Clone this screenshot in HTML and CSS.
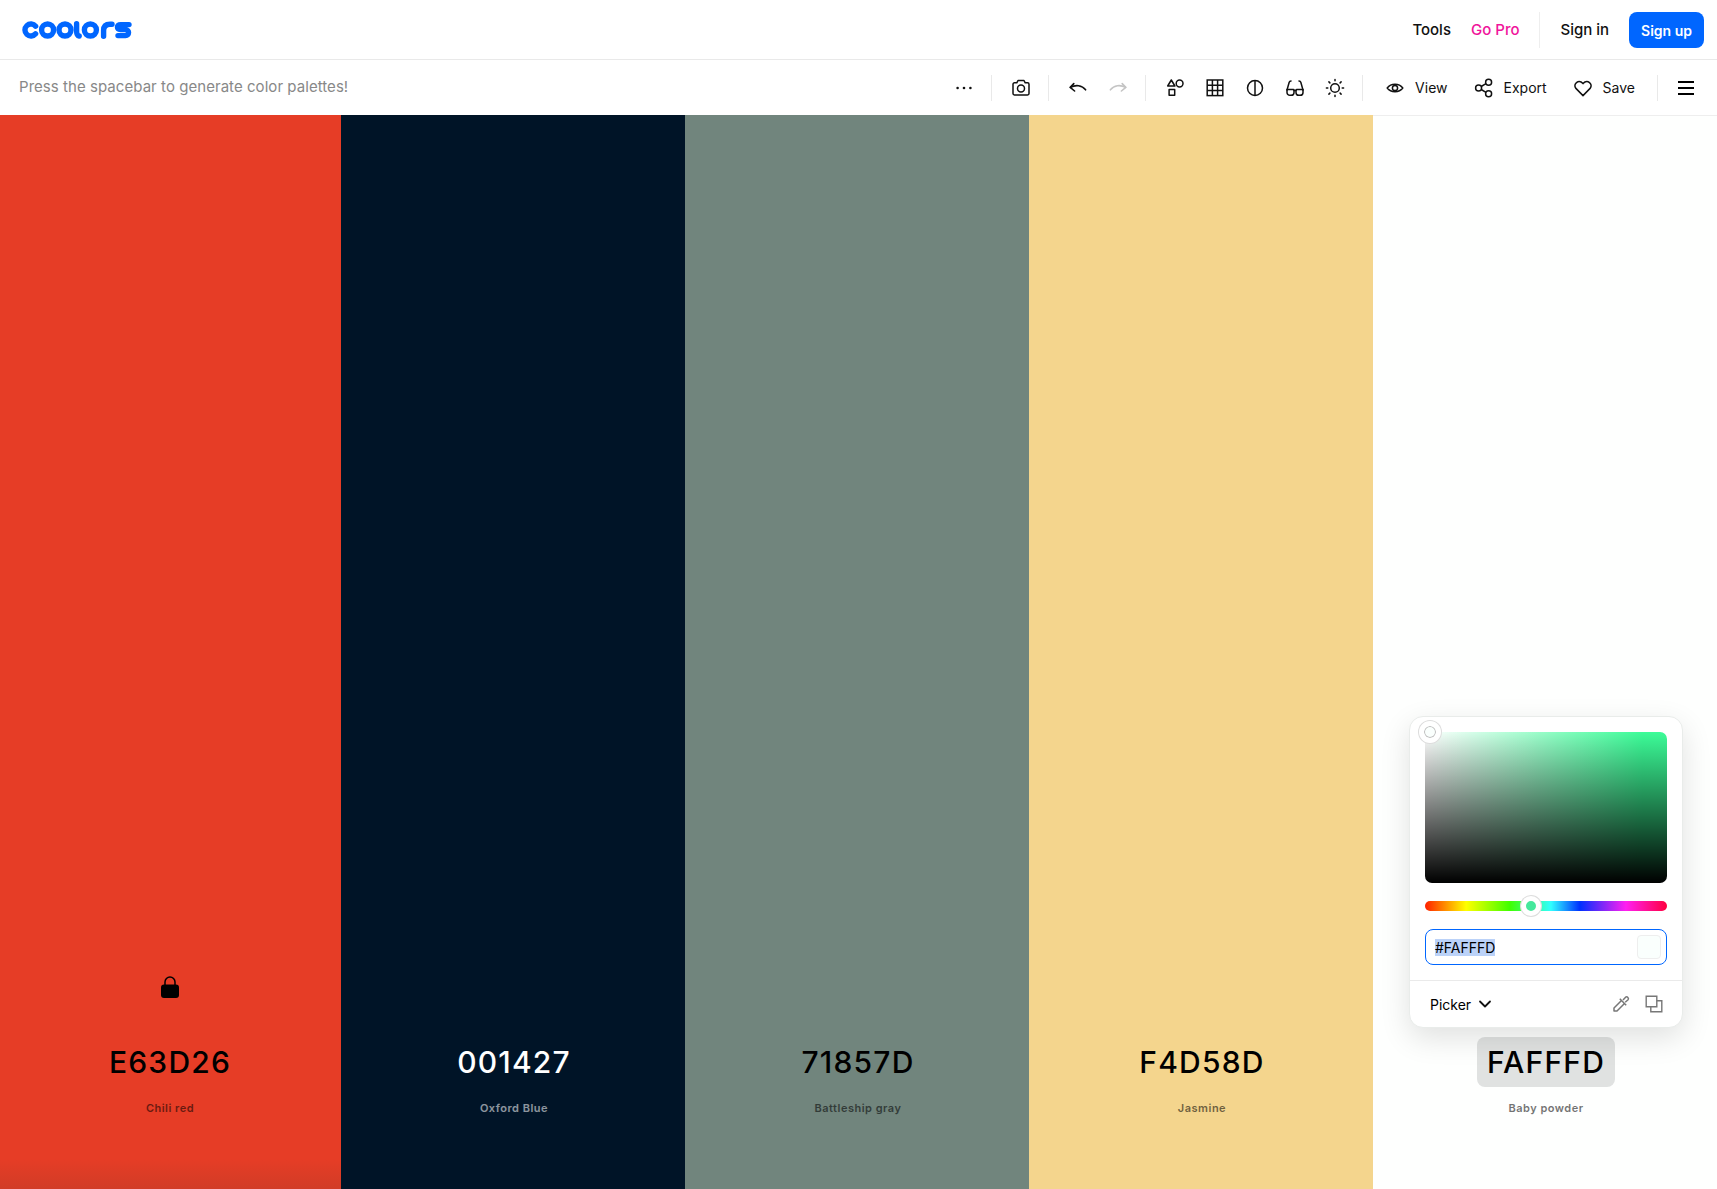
FILE: index.html
```html
<!DOCTYPE html>
<html lang="en">
<head>
    <meta charset="UTF-8">
    <meta name="viewport" content="width=device-width, initial-scale=1.0">
    <title>Coolors palette generator</title>
    <link rel="stylesheet" href="styles.css">
</head>
<body>
    <div class="page">
        <header class="navbar">
            <a class="logo" href="#" aria-label="coolors">
                <svg width="110" height="18" viewBox="0 0 110 18" fill="none" stroke="#0066ff" stroke-width="5.4" stroke-linecap="round">
                    <path d="M13.6 5.2A6 6 0 1 0 13.6 12.8"/>
                    <circle cx="25.6" cy="9" r="6"/>
                    <circle cx="43" cy="9" r="6"/>
                    <path d="M54.6 2.7V10Q54.6 14.6 57.2 15"/>
                    <circle cx="68.4" cy="9" r="6"/>
                    <path d="M81.6 15.2V9.5Q81.6 3.2 88 3.2H90"/>
                    <path d="M107 3.6H98.6C94.4 3.6 94.4 8.4 98.6 8.6H103.4C107.6 8.8 107.6 14.4 103.4 14.6H96"/>
                </svg>
            </a>
            <nav class="nav-links">
                <a href="#">Tools</a>
                <a href="#" class="gopro">Go Pro</a>
                <span class="nav-sep"></span>
                <a href="#">Sign in</a>
                <a href="#" class="signup">Sign up</a>
            </nav>
        </header>

        <div class="toolbar">
            <p class="hint">Press the spacebar to generate color palettes!</p>
            <div class="tools">
                <button class="icon-btn" aria-label="More">
                    <svg width="20" height="20" viewBox="0 0 20 20" fill="#111"><circle cx="3.6" cy="10" r="1.3"/><circle cx="10" cy="10" r="1.3"/><circle cx="16.4" cy="10" r="1.3"/></svg>
                </button>
                <span class="sep"></span>
                <button class="icon-btn" aria-label="Quick view">
                    <svg width="20" height="20" viewBox="0 0 20 20" fill="none" stroke="#111" stroke-width="1.5" stroke-linejoin="round"><path d="M2 6.2a1.4 1.4 0 0 1 1.4-1.4h2.4L7 2.5h6l1.2 2.3h2.4A1.4 1.4 0 0 1 18 6.2v9.4a1.4 1.4 0 0 1-1.4 1.4H3.4A1.4 1.4 0 0 1 2 15.6z"/><circle cx="10" cy="10.6" r="3.5"/></svg>
                </button>
                <span class="sep"></span>
                <button class="icon-btn" aria-label="Undo">
                    <svg width="20" height="20" viewBox="0 0 20 20" fill="none" stroke="#111" stroke-width="1.6" stroke-linecap="round" stroke-linejoin="round"><path d="M5.8 5.6 2.2 9.4l4.4 3.6"/><path d="M2.4 9.4C7.5 6.6 14 7 17.6 11.8"/></svg>
                </button>
                <button class="icon-btn" aria-label="Redo">
                    <svg width="20" height="20" viewBox="0 0 20 20" fill="none" stroke="#c4c4c4" stroke-width="1.6" stroke-linecap="round" stroke-linejoin="round"><path d="M14.2 5.6l3.6 3.8-4.4 3.6"/><path d="M17.6 9.4C12.5 6.6 6 7 2.4 11.8"/></svg>
                </button>
                <span class="sep"></span>
                <button class="icon-btn" aria-label="Shapes">
                    <svg width="20" height="20" viewBox="0 0 20 20" fill="none" stroke="#111" stroke-width="1.5" stroke-linejoin="round"><path d="M6.3 2 9.9 8H2.7z"/><circle cx="14.6" cy="5.5" r="3.4"/><rect x="4.1" y="11.6" width="5.6" height="5.6"/></svg>
                </button>
                <button class="icon-btn" aria-label="Grid">
                    <svg width="20" height="20" viewBox="0 0 20 20" fill="none" stroke="#111" stroke-width="1.5"><rect x="2.2" y="2" width="15.6" height="15.6"/><path d="M7.4 2v15.6M12.6 2v15.6M2.2 7.2h15.6M2.2 12.4h15.6"/></svg>
                </button>
                <button class="icon-btn" aria-label="Contrast">
                    <svg width="20" height="20" viewBox="0 0 20 20" fill="none" stroke="#111" stroke-width="1.5"><circle cx="10" cy="10" r="7.5"/><path d="M10 2.5v15"/></svg>
                </button>
                <button class="icon-btn" aria-label="Color blindness">
                    <svg width="20" height="20" viewBox="0 0 20 20" fill="none" stroke="#111" stroke-width="1.5" stroke-linecap="round" stroke-linejoin="round"><path d="M2 12 4.2 4.2Q4.6 3 6 3"/><path d="M18 12 15.8 4.2Q15.4 3 14 3"/><path d="M2 11.6h6.4a.6.6 0 0 1 .6.6v2.2a2.9 2.9 0 0 1-2.9 2.9H4.9A2.9 2.9 0 0 1 2 14.4z"/><path d="M18 11.6h-6.4a.6.6 0 0 0-.6.6v2.2a2.9 2.9 0 0 0 2.9 2.9h1.2a2.9 2.9 0 0 0 2.9-2.9z"/><path d="M9 12.6h2"/></svg>
                </button>
                <button class="icon-btn" aria-label="Brightness">
                    <svg width="20" height="20" viewBox="0 0 20 20" fill="none" stroke="#111" stroke-width="1.5" stroke-linecap="round"><circle cx="10" cy="10" r="4.3"/><path d="M10 1.4v1.4M10 17.2v1.4M1.4 10h1.4M17.2 10h1.4M3.9 3.9l1 1M15.1 15.1l1 1M3.9 16.1l1-1M15.1 4.9l1-1"/></svg>
                </button>
                <span class="sep"></span>
                <div class="actions">
                    <button class="action-btn">
                        <svg width="20" height="20" viewBox="0 0 20 20" fill="none" stroke="#111" stroke-width="1.5" stroke-linejoin="round"><path d="M2.2 10C6 5 14 5 17.8 10 14 15 6 15 2.2 10z"/><circle cx="10" cy="10" r="2.6"/></svg>
                        View
                    </button>
                    <button class="action-btn">
                        <svg width="20" height="20" viewBox="0 0 20 20" fill="none" stroke="#111" stroke-width="1.5"><circle cx="4.6" cy="10" r="3"/><circle cx="14.6" cy="4.2" r="3"/><circle cx="14.6" cy="15.8" r="3"/><path d="M7.2 8.5l4.8-2.8M7.2 11.5l4.8 2.8"/></svg>
                        Export
                    </button>
                    <button class="action-btn">
                        <svg width="20" height="20" viewBox="0 0 20 20" fill="none" stroke="#111" stroke-width="1.5" stroke-linejoin="round"><path d="M10 17.6 2.9 10.4C-.6 6.2 5.6 .6 10 5.6 14.4 .6 20.6 6.2 17.1 10.4z"/></svg>
                        Save
                    </button>
                </div>
                <span class="sep"></span>
                <button class="icon-btn menu-btn" aria-label="Menu">
                    <svg width="20" height="20" viewBox="0 0 20 20" fill="none" stroke="#000" stroke-width="1.8"><path d="M2 4h16M2 10h16M2 16h16"/></svg>
                </button>
            </div>
        </div>

        <main class="palette">
            <section class="swatch chili">
                <svg class="lock" width="20" height="22" viewBox="0 0 20 22" fill="#000"><path d="M5 9V6a5 5 0 0 1 10 0v3" fill="none" stroke="#000" stroke-width="1.5"/><rect x="1" y="8.5" width="18" height="13.5" rx="3"/></svg>
                <div class="hex">E63D26</div>
                <div class="name">Chili red</div>
            </section>
            <section class="swatch oxford">
                <div class="hex">001427</div>
                <div class="name">Oxford Blue</div>
            </section>
            <section class="swatch battleship">
                <div class="hex">71857D</div>
                <div class="name">Battleship gray</div>
            </section>
            <section class="swatch jasmine">
                <div class="hex">F4D58D</div>
                <div class="name">Jasmine</div>
            </section>
            <section class="swatch baby">
                <div class="hex active">FAFFFD</div>
                <div class="name">Baby powder</div>

                <div class="picker">
                    <div class="picker-body">
                        <div class="sat-box">
                            <span class="sat-thumb"></span>
                        </div>
                        <div class="hue-bar">
                            <span class="hue-thumb"></span>
                        </div>
                        <div class="hex-input">
                            <span class="selected">#FAFFFD</span>
                            <span class="chip"></span>
                        </div>
                    </div>
                    <div class="picker-foot">
                        <span class="mode">
                            Picker
                            <svg width="14" height="14" viewBox="0 0 14 14" fill="none" stroke="#111" stroke-width="1.8" stroke-linecap="round" stroke-linejoin="round"><path d="M2 4.5l5 5 5-5"/></svg>
                        </span>
                        <span class="foot-icons">
                            <svg width="18" height="18" viewBox="0 0 18 18" fill="none" stroke="#777" stroke-width="1.5" stroke-linejoin="round"><path d="M9.5 5.5 2 13v3h3l7.5-7.5"/><path d="M7.8 3.8l6.4 6.4M11 5l2.6-2.8a1.8 1.8 0 0 1 2.5 2.5L13.2 7.2"/></svg>
                            <svg width="18" height="18" viewBox="0 0 18 18" fill="none" stroke="#777" stroke-width="1.4"><path d="M1.2 1.2h10.6v10.6H1.2z"/><path d="M11.8 5.8h5v11h-11v-5"/></svg>
                        </span>
                    </div>
                </div>
            </section>
        </main>
    </div>
</body>
</html>
```

FILE: styles.css
```css
* {
    box-sizing: border-box;
}

html,
body {
    height: 100%;
}

body {
    margin: 0;
    background-color: #fff;
    color: #111;
    font-family: Inter, "Liberation Sans", sans-serif;
    overflow: hidden;
}

a {
    color: inherit;
    text-decoration: none;
}

button {
    border: none;
    background: none;
    padding: 0;
    color: inherit;
    font: inherit;
    cursor: pointer;
}

.page {
    display: flex;
    flex-direction: column;
    height: 100%;
}

/* top bar */
.navbar {
    display: flex;
    justify-content: space-between;
    align-items: center;
    height: 60px;
    padding: 0 13px 0 22px;
    border-bottom: 1px solid #e9e9e9;
}

.logo {
    display: flex;
}

.nav-links {
    display: flex;
    align-items: center;
    font-size: 15px;
    font-weight: 500;
}

.nav-links a {
    margin-right: 20px;
}

.nav-links .gopro {
    margin-right: 20px;
    color: #f0149b;
}

.nav-sep {
    width: 1px;
    height: 36px;
    margin-right: 20px;
    background-color: #eee;
}

.nav-links .signup {
    display: flex;
    align-items: center;
    height: 36px;
    margin: 0;
    padding: 1px 12px 0;
    border-radius: 8px;
    background-color: #0066ff;
    color: #fff;
    font-size: 14px;
    font-weight: 600;
}

/* toolbar */
.toolbar {
    display: flex;
    justify-content: space-between;
    align-items: center;
    height: 55px;
    padding: 0 11px 0 19px;
}

.hint {
    margin: 0 0 2px;
    color: #888;
    font-size: 15px;
    letter-spacing: 0.05px;
}

.tools {
    display: flex;
    align-items: center;
}

.icon-btn {
    display: flex;
    justify-content: center;
    align-items: center;
    width: 40px;
    height: 40px;
    padding-left: 1px;
}

.menu-btn {
    padding-left: 0;
}

.sep {
    width: 1px;
    height: 26px;
    margin: 0 8px;
    background-color: #e9e9e9;
}

.actions {
    display: flex;
    gap: 26px;
    padding: 0 14px;
}

.action-btn {
    display: flex;
    align-items: center;
    gap: 10px;
    font-size: 14px;
    font-weight: 400;
    line-height: 18px;
}

/* colour columns */
.palette {
    flex: 1;
    display: grid;
    grid-template-columns: 341px repeat(4, 1fr);
}

.swatch {
    position: relative;
    display: flex;
    flex-direction: column;
    justify-content: flex-end;
    align-items: center;
    padding: 0 0 73px 2px;
    color: #000;
}

.chili {
    padding: 0 1px 73px 0;
    background: linear-gradient(to bottom, #e63d26 calc(100% - 30px), #d13c26);
}

.oxford {
    background-color: #001427;
    color: #fff;
}

.battleship {
    background-color: #71857d;
}

.jasmine {
    background-color: #f4d58d;
}

.baby {
    background-color: #fefffe;
    border-top: 1px solid #eee;
}

.lock {
    margin-bottom: 39px;
}

.hex {
    padding: 0 10px;
    border-radius: 8px;
    font-size: 30px;
    font-weight: 500;
    line-height: 50px;
    letter-spacing: 1.2px;
}

.hex.active {
    background-color: #e0e2e1;
}

.name {
    margin-top: 13px;
    font-size: 11px;
    font-weight: 600;
    line-height: 16px;
    letter-spacing: 0.5px;
    opacity: 0.55;
}

/* colour picker popover */
.picker {
    position: absolute;
    top: 600px;
    left: 36px;
    width: 274px;
    border: 1px solid #e9ecea;
    border-radius: 14px;
    background-color: #fff;
    box-shadow: 0 10px 30px rgba(0, 0, 0, 0.12);
}

.picker-body {
    padding: 15px 15px 15px;
    border-bottom: 1px solid #eaeaea;
}

.sat-box {
    position: relative;
    height: 151px;
    border-radius: 7px;
    background:
        linear-gradient(to top, #000, transparent),
        linear-gradient(to right, #fff, transparent 90%),
        #3cfc98;
}

.sat-thumb {
    position: absolute;
    top: -11px;
    left: -6px;
    width: 22px;
    height: 22px;
    border: 5px solid #fff;
    border-radius: 50%;
    background-color: #fafffd;
    box-shadow: 0 0 0 1px #ddd, inset 0 0 0 1px #bbb;
}

.hue-bar {
    position: relative;
    height: 10px;
    margin-top: 18px;
    border-radius: 5px;
    background: linear-gradient(to right, #ff2000, #ffff00 17%, #40ff00 35%, #30ffff 52%, #0030ff 64%, #ff20f0 83%, #ff0040);
}

.hue-thumb {
    position: absolute;
    top: -5px;
    left: 96px;
    width: 20px;
    height: 20px;
    border: 5px solid #fff;
    border-radius: 50%;
    background-color: #45e89c;
    box-shadow: 0 0 0 1px #ddd;
}

.hex-input {
    display: flex;
    justify-content: space-between;
    align-items: center;
    height: 36px;
    margin-top: 18px;
    padding: 0 5px 0 9px;
    border: 1px solid #0066ff;
    border-radius: 8px;
    font-size: 14px;
}

.selected {
    background-color: #bbd2f8;
    line-height: 17px;
}

.chip {
    width: 24px;
    height: 24px;
    border: 1px solid #eee;
    border-radius: 4px;
    background-color: #fafffd;
}

.picker-foot {
    display: flex;
    justify-content: space-between;
    align-items: center;
    height: 46px;
    padding: 0 19px 0 20px;
    font-size: 14px;
}

.mode {
    display: flex;
    align-items: center;
    gap: 7px;
    font-size: 14px;
}

.foot-icons {
    display: flex;
    gap: 15px;
}
```
